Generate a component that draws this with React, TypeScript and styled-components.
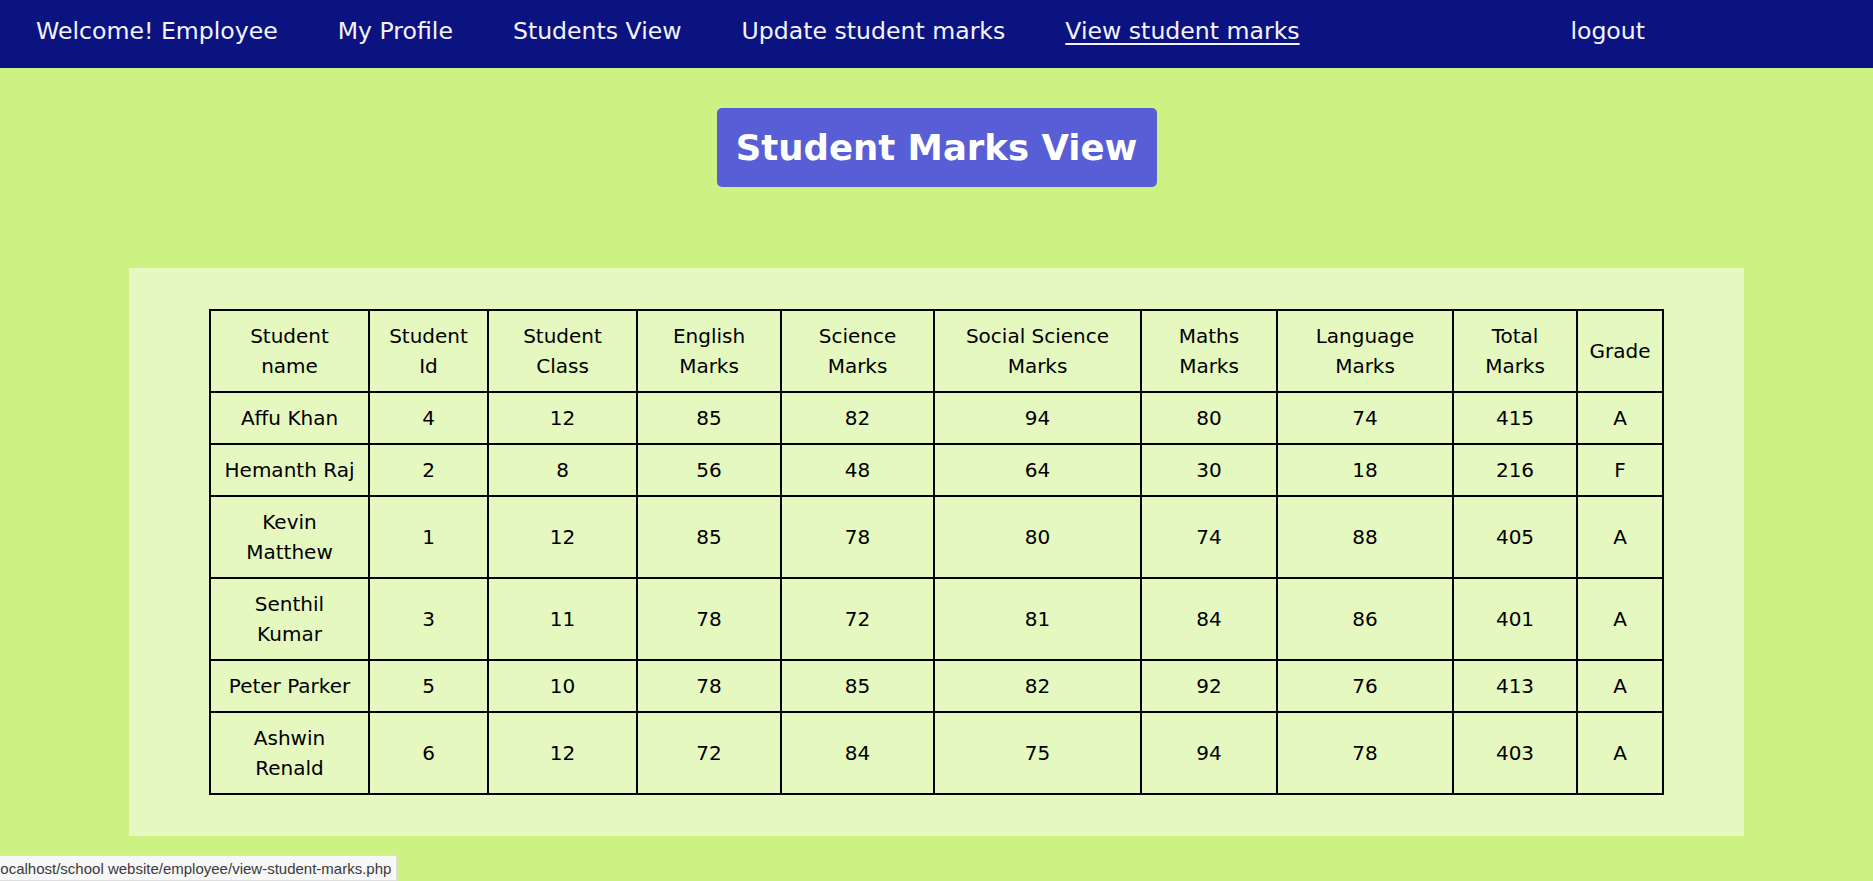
import React from "react";
import styled, { createGlobalStyle } from "styled-components";

const Global = createGlobalStyle`
  html, body { margin: 0; padding: 0; }
  body {
    background: #cdf283;
    font-family: "DejaVu Sans", "Noto Sans", sans-serif;
    min-height: 881px;
  }
`;

const Nav = styled.nav`
  height: 68px;
  background: #0b1381;
  display: flex;
  align-items: center;
  padding: 0 0 6px 36px;
  box-sizing: border-box;
`;

const NavLink = styled.a<{ $active?: boolean; $push?: boolean }>`
  color: #f4f4ff;
  font-size: 23.6px;
  text-decoration: ${(p) => (p.$active ? "underline" : "none")};
  text-underline-offset: 4px;
  text-decoration-thickness: 1.5px;
  margin-right: 60px;
  margin-left: ${(p) => (p.$push ? "auto" : "0")};
  white-space: nowrap;
  cursor: pointer;
  &:last-child { margin-right: 228px; }
`;

const Main = styled.main`
  display: flex;
  flex-direction: column;
  align-items: center;
  padding-top: 40px;
`;

const Title = styled.h1`
  margin: 0;
  background: #585ed6;
  color: #fff;
  border-radius: 5px;
  font-size: 35.5px;
  font-weight: 700;
  width: 440px;
  height: 79px;
  display: flex;
  align-items: center;
  justify-content: center;
  box-sizing: border-box;
  white-space: nowrap;
`;

const Panel = styled.section`
  margin-top: 81px;
  width: 1615px;
  background: #e5f8c0;
  padding: 41px 0;
  box-sizing: border-box;
  display: flex;
  justify-content: center;
`;

const Table = styled.table`
  width: 90%;
  border-collapse: collapse;
  table-layout: fixed;
  border: 2px solid #000;
`;

const Col = styled.col<{ $w: number }>`
  width: ${(p) => p.$w}px;
`;

const Cell = styled.td`
  border: 2px solid #000;
  padding: 10px 10px;
  text-align: center;
  font-size: 20px;
  line-height: 30px;
  color: #000;
`;

const HeadCell = styled(Cell).attrs({ as: "th" })`
  font-weight: 400;
`;

const StatusBar = styled.div`
  position: fixed;
  left: 0;
  bottom: 0;
  width: 397px;
  height: 26px;
  background: #f7f7f7;
  border: 1px solid #dedede;
  border-left: none;
  box-sizing: border-box;
  overflow: hidden;
  display: flex;
  align-items: center;
`;

const StatusText = styled.span`
  font-family: "Liberation Sans", Arial, sans-serif;
  font-size: 15px;
  color: #3a3a3a;
  white-space: nowrap;
  margin-left: -3px;
`;

const widths = [159, 119, 149, 144, 153, 207, 136, 176, 124, 86];

const headers = [
  "Student name",
  "Student Id",
  "Student Class",
  "English Marks",
  "Science Marks",
  "Social Science Marks",
  "Maths Marks",
  "Language Marks",
  "Total Marks",
  "Grade",
];

const rows: (string | number)[][] = [
  ["Affu Khan", 4, 12, 85, 82, 94, 80, 74, 415, "A"],
  ["Hemanth Raj", 2, 8, 56, 48, 64, 30, 18, 216, "F"],
  ["Kevin Matthew", 1, 12, 85, 78, 80, 74, 88, 405, "A"],
  ["Senthil Kumar", 3, 11, 78, 72, 81, 84, 86, 401, "A"],
  ["Peter Parker", 5, 10, 78, 85, 82, 92, 76, 413, "A"],
  ["Ashwin Renald", 6, 12, 72, 84, 75, 94, 78, 403, "A"],
];

export default function App() {
  return (
    <>
      <Global />
      <Nav>
        <NavLink>Welcome! Employee</NavLink>
        <NavLink>My Profile</NavLink>
        <NavLink>Students View</NavLink>
        <NavLink>Update student marks</NavLink>
        <NavLink $active>View student marks</NavLink>
        <NavLink $push>logout</NavLink>
      </Nav>
      <Main>
        <Title>Student Marks View</Title>
        <Panel>
          <Table>
            <colgroup>
              {widths.map((w, i) => (
                <Col key={i} $w={w} />
              ))}
            </colgroup>
            <thead>
              <tr>
                {headers.map((h) => (
                  <HeadCell key={h}>{h}</HeadCell>
                ))}
              </tr>
            </thead>
            <tbody>
              {rows.map((r) => (
                <tr key={r[0] as string}>
                  {r.map((c, i) => (
                    <Cell key={i}>{c}</Cell>
                  ))}
                </tr>
              ))}
            </tbody>
          </Table>
        </Panel>
      </Main>
      <StatusBar>
        <StatusText>localhost/school website/employee/view-student-marks.php</StatusText>
      </StatusBar>
    </>
  );
}
